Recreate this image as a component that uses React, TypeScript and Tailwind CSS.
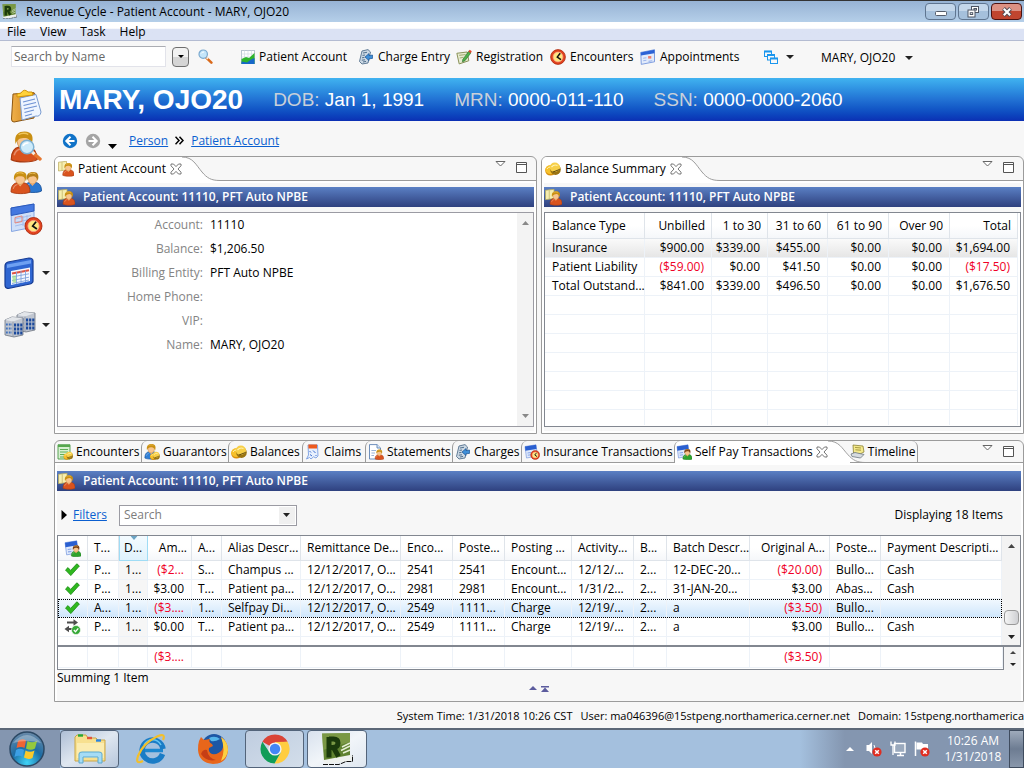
import type { ReactNode } from "react";

type IconProps = { size?: number };

function PersonShape({ x = 0, y = 0, s = 1, shirt = "#d9531e", dark = "#a93a10", hair = "#c98f12" }: { x?: number; y?: number; s?: number; shirt?: string; dark?: string; hair?: string }) {
  return (
    <g transform={`translate(${x} ${y}) scale(${s})`}>
      <path d="M0.5 19 C0.5 13 3 11 6 10.4 L12 10.4 C15.500 11 18 13 18 19 C15 21 4 21 0.5 19Z" fill={shirt} stroke={dark} strokeWidth="0.8" />
      <path d="M2.500 16 Q3.500 12.500 6.500 12" stroke="#fff" strokeWidth="1" opacity="0.350" fill="none" />
      <path d="M6 10.4 L9 14 L12 10.4Z" fill="#f3b27a" />
      <ellipse cx="9" cy="6.8" rx="4.400" ry="5.200" fill="#f8c58e" stroke="#c9853b" strokeWidth="0.5" />
      <path d="M3.4 8.500 C2.200 2 5.5 0 9.5 0 C14.500 0 16 3.4 14.2 9 C13.4 4.8 11 4 8.6 4.4 C6 4.6 4.6 5.4 3.4 8.500Z" fill={hair} />
      <path d="M5.5 2.2 C7.5 0.8 10.5 0.9 12 2" stroke="#f0c65a" strokeWidth="0.9" fill="none" />
    </g>
  );
}

function ClockShape({ cx, cy, r }: { cx: number; cy: number; r: number }) {
  return (
    <g>
      <circle cx={cx} cy={cy} r={r} fill="#e2431e" stroke="#a82408" strokeWidth={r * 0.1} />
      <circle cx={cx} cy={cy} r={r * 0.66} fill="#ffe680" stroke="#f7a78b" strokeWidth={r * 0.1} />
      <path d={`M${cx + r * 0.3} ${cy - r * 0.5} L${cx - r * 0.1} ${cy} L${cx + r * 0.4} ${cy + r * 0.35}`} stroke="#111" strokeWidth={r * 0.2} fill="none" />
    </g>
  );
}

function Coins({ x = 0, y = 0, s = 1 }: { x?: number; y?: number; s?: number }) {
  return (
    <g transform={`translate(${x} ${y}) scale(${s})`}>
      <ellipse cx="5.500" cy="8.600" rx="5.300" ry="5" fill="#d98f0c" />
      <ellipse cx="5.200" cy="7.600" rx="4.900" ry="4.400" fill="#f6c12c" />
      <ellipse cx="10.500" cy="7.500" rx="5.300" ry="5.400" fill="#9a7413" />
      <ellipse cx="9.800" cy="5.200" rx="5.200" ry="4.700" fill="#f7cf48" />
      <path d="M6.500 5 Q9 2 12.500 3.500" stroke="#fff2b0" strokeWidth="1.200" fill="none" />
      <path d="M2 7 Q3 5 5 5" stroke="#fff2b0" strokeWidth="1" fill="none" />
      <path d="M8 10 L14.500 7.500" stroke="#5d4a12" strokeWidth="1" />
    </g>
  );
}

function CalendarShape() {
  return (
    <g>
      <path d="M1 2.500 L12 0.800 L13.5 12 L2.5 14Z" fill="#dfe9fb" stroke="#7b9be0" strokeWidth="0.7" />
      <path d="M1 2.500 L12 0.800 L12.600 5 L1.4 6.800Z" fill="#2a5fd0" />
      <path d="M3.5 9 L7 8.500 M3.8 11.2 L7 10.8" stroke="#86a5e8" strokeWidth="1" />
    </g>
  );
}

function PatientIcon({ size = 16 }: IconProps) {
  return (
    <svg width={size} height={size} viewBox="0 0 16 16" className="shrink-0">
      <path d="M0.5 1.2 L8.5 0.3 L8.5 9 L0.5 10Z" fill="#f6eeb0" stroke="#b9ab5b" strokeWidth="0.7" />
      <path d="M4 1.2 L4 9.4" stroke="#b9ab5b" strokeWidth="0.6" />
      <PersonShape x={4.4} y={2} s={0.65} />
    </svg>
  );
}

function BalanceIcon() {
  return <svg width="16" height="16" viewBox="0 0 16 16" className="shrink-0"><Coins y={1} /></svg>;
}

function ChargeIcon() {
  return (
    <svg width="16" height="16" viewBox="0 0 16 16" className="shrink-0">
      <path d="M4 2 L10 0.6 L12.5 3 L10 14 L4 15 L1.5 12.5Z" fill="#cbd8e4" stroke="#54718c" strokeWidth="0.9" />
      <path d="M5 4 L9 3.3 M4.5 6.4 L7 6 M4 8.8 L6.5 8.4 M3.8 11.2 L7 10.8 M5 13 L8 12.4" stroke="#54718c" strokeWidth="1" />
      <path d="M7 8 L11 4.6 L11 6.6 L14.5 6 L14.5 9.4 L11 9.8 L11 11.6Z" fill="#3f8fd8" stroke="#1d5593" strokeWidth="0.7" />
    </svg>
  );
}

function EncounterTabIcon() {
  return (
    <svg width="16" height="16" viewBox="0 0 16 16" className="shrink-0">
      <path d="M1 0.8 H13 V15 H1Z" fill="#d8f0d2" stroke="#4a9a45" strokeWidth="0.9" />
      <path d="M1 0.8 H13 V3 H1Z" fill="#57a84f" />
      <path d="M3 5.5 H11 M3 8 H11 M3 10.5 H8 M3 13 H7" stroke="#5fae58" strokeWidth="1.1" />
      <Coins x={6.5} y={7.5} s={0.6} />
    </svg>
  );
}

function GuarantorIcon() {
  return (
    <svg width="16" height="16" viewBox="0 0 16 16" className="shrink-0">
      <PersonShape x={0.5} y={0} s={0.74} shirt="#2f7fd6" dark="#174f95" />
      <Coins x={6} y={7.5} s={0.62} />
    </svg>
  );
}

function ClaimsIcon() {
  return (
    <svg width="16" height="16" viewBox="0 0 16 16" className="shrink-0">
      <path d="M3 1 H12.5 L13 12 L11 14 L8.5 12.8 L6 15 L4.5 13.5 L1.5 15 L3.5 11Z" fill="#e8f0fd" stroke="#6b93dd" strokeWidth="0.8" />
      <path d="M3.4 0.6 H12 V4.6 H3.4Z" fill="#ee5a1e" />
      <path d="M4.5 7 L6 8.5 M8 6.5 L10.5 9 M5 10.5 L7 12 M10.5 11 L11.5 12" stroke="#3d6fd0" strokeWidth="1" />
    </svg>
  );
}

function StatementIcon() {
  return (
    <svg width="16" height="16" viewBox="0 0 16 16" className="shrink-0">
      <path d="M1.5 0.6 H9 L12.5 4 V15 H1.5Z" fill="#fff" stroke="#5f83b4" strokeWidth="0.9" />
      <path d="M9 0.6 V4 H12.5" fill="#dbe7f6" stroke="#5f83b4" strokeWidth="0.9" />
      <path d="M3.4 6.5 H8 M3.4 9 H7 M3.4 11.5 H6" stroke="#9bb4d6" />
      <PersonShape x={6.8} y={5.500} s={0.5} />
    </svg>
  );
}

function InsuranceIcon() {
  return <svg width="16" height="16" viewBox="0 0 16 16" className="shrink-0"><CalendarShape /><ClockShape cx={11.2} cy={11} r={4.5} /></svg>;
}

function SelfPayIcon({ size = 16 }: IconProps) {
  return (
    <svg width={size} height={size} viewBox="0 0 16 16" className="shrink-0">
      <CalendarShape />
      <PersonShape x={6.6} y={5} s={0.53} shirt="#2fa32c" dark="#15701a" hair="#7a3d12" />
    </svg>
  );
}

function TimelineIcon() {
  return (
    <svg width="16" height="16" viewBox="0 0 16 16" className="shrink-0">
      <path d="M3 1 L13 2 L14 8 L10 10 L3.5 9Z" fill="#f4e98c" stroke="#8a8235" strokeWidth="0.8" />
      <path d="M5 3.4 L11 4 M5.4 5.8 L11 6.2" stroke="#a79b43" />
      <path d="M1 10 L5 8.5 L14 10.5 L10.5 14 L2 12.5Z" fill="#d6dbe0" stroke="#6d7780" strokeWidth="0.8" />
    </svg>
  );
}

function ChartIcon() {
  return (
    <svg width="14" height="14" viewBox="0 0 14 14" className="shrink-0">
      <rect x="0.5" y="0.5" width="13" height="13" fill="#fff" stroke="#b9c4cf" />
      <path d="M3.5 0.5 V13 M7 0.5 V13 M10.5 0.5 V13 M0.5 4 H13 M0.5 7 H13" stroke="#d3dbe3" strokeWidth="0.7" />
      <path d="M0.5 14 V9 L5 7 L8 8 L13.5 3 V14Z" fill="#2fb52c" />
      <path d="M0.5 14 V11.5 L6 12.5 L10 9.5 L13.5 8 V14Z" fill="#1768c9" />
    </svg>
  );
}

function RegistrationIcon() {
  return (
    <svg width="16" height="16" viewBox="0 0 15 15" className="shrink-0">
      <path d="M0.8 4 L10.5 2.8 L12 11 L3 14Z" fill="#e8ecd2" stroke="#858d52" strokeWidth="0.9" />
      <path d="M3 6 L9 5.2 M3.5 8.4 L7 7.8" stroke="#a8b07a" />
      <path d="M6.4 9.8 L12 2 L14 3.6 L8.4 11 L6 12Z" fill="#4fb04a" stroke="#2a6d28" strokeWidth="0.6" />
      <path d="M11.6 2.4 L12.8 0.6 L14.8 2.2 L13.6 4Z" fill="#e2432a" />
    </svg>
  );
}

function ClockIcon() {
  return <svg width="16" height="16" viewBox="0 0 16 16" className="shrink-0"><ClockShape cx={8} cy={8} r={7.4} /></svg>;
}

function AppointmentIcon() {
  return (
    <svg width="16" height="16" viewBox="0 0 15 15" className="shrink-0">
      <path d="M0.7 3.2 L13.6 0.7 V12 L1.2 14.4Z" fill="#e2ebfb" stroke="#6c8fdb" strokeWidth="0.8" />
      <path d="M0.7 3.2 L13.6 0.7 V4 L0.9 6Z" fill="#2b62d6" />
      <path d="M3 8.6 L6 8.2 M3 11 L6 10.6 M8 11.6 L11.5 11" stroke="#9db6ec" />
      <rect x="7.6" y="6.6" width="3" height="2.4" fill="#f08070" />
    </svg>
  );
}

function WindowsIcon() {
  return (
    <svg width="14" height="14" viewBox="0 0 14 14" fill="#f7f7f7" stroke="#1a96ee" className="shrink-0">
      <rect x="0.5" y="1" width="7" height="5.5" /><path d="M0.5 1.7 H7.5" strokeWidth="1.6" />
      <rect x="3.5" y="4.5" width="7" height="5.5" /><path d="M3.5 5.2 H10.5" strokeWidth="1.6" />
      <rect x="6.5" y="8" width="7" height="5.5" /><path d="M6.5 8.7 H13.5" strokeWidth="1.6" />
    </svg>
  );
}

function SearchIcon() {
  return (
    <svg width="15" height="15" viewBox="0 0 15 15">
      <path d="M8 8.4 L13.4 13.6" stroke="#d96a1c" strokeWidth="2.6" strokeLinecap="round" />
      <path d="M8.6 8.4 L10 9.8" stroke="#f5ece2" strokeWidth="2" />
      <circle cx="5.2" cy="5.2" r="4.2" fill="#c5e6fa" stroke="#7aa9cf" strokeWidth="1.2" />
      <path d="M3 4.6 Q4 2.8 6 3" stroke="#fff" fill="none" />
    </svg>
  );
}

function CernerIcon({ size }: { size: number }) {
  return (
    <svg width={size} height={size} viewBox="0 0 32 32" className="shrink-0">
      <path d="M3 24 L29 21 L32 24 L30 28 L5 31 L1 27Z" fill="#eef1ee" />
      <path d="M2 31.500 H18 L25 28.500 L31.500 28.500 V22" stroke="#111" strokeWidth="1" fill="none" strokeDasharray="5 1" />
      <path d="M1 0.500 L29 0 L29 22 L3 27Z" fill="#5f8230" />
      <path d="M1 0.500 L29 0 L29 9 L2 17Z" fill="#8fac58" opacity="0.550" />
      <path d="M21 14 L29 10 M20 17.500 L29 13 M22 20 L29 17" stroke="#e4eed3" strokeWidth="1.400" />
      <path d="M8 4 V24.500 M8 6 H12.500 Q17 6 17 10 Q17 14.500 12 14.500 H8 M12.500 14.500 L17.500 23.500" stroke="#1b3a0c" strokeWidth="5" fill="none" />
    </svg>
  );
}

function ClipboardIcon() {
  return (
    <svg width="32" height="34" viewBox="0 0 32 34">
      <defs><linearGradient id="cb" x1="0" x2="1"><stop offset="0" stopColor="#f0b04a" /><stop offset="1" stopColor="#c97d16" /></linearGradient></defs>
      <path d="M3 5 L23 3.500 Q25 3.500 25 6 L24 29 L4 33 Q1.500 33 1.500 30Z" fill="url(#cb)" stroke="#8d5610" />
      <path d="M10 9 L26 5.500 L31 23 Q30 28 26 27 L12 31Z" fill="#eef5ff" stroke="#7a9cd0" />
      <path d="M13 13 L25 10 M13.500 16.500 L26 13.500 M14 20 L27 17 M14.500 23.500 L24 21 M15 27 L22 25" stroke="#6e92d4" strokeWidth="1.200" />
      <path d="M7 8 L7 5 L11 4 Q14 -1 18 3 L22 3 L23 6Z" fill="#ffd23b" stroke="#d2940b" />
    </svg>
  );
}

function PersonSearchIcon() {
  return (
    <svg width="32" height="32" viewBox="0 0 32 32">
      <PersonShape x={0.5} y={0.5} s={1.48} />
      <path d="M22 21 L30 28" stroke="#e6762d" strokeWidth="3.400" strokeLinecap="round" />
      <path d="M21.500 20.500 L24.500 23.200" stroke="#f4ece4" strokeWidth="3" />
      <circle cx="17" cy="16" r="6.800" fill="#cdebfb" stroke="#7fb1d2" strokeWidth="1.500" />
      <path d="M13 15 Q14.500 11.500 18.500 12" stroke="#fff" strokeWidth="1.500" fill="none" />
    </svg>
  );
}

function PeopleIcon() {
  return (
    <svg width="32" height="24" viewBox="0 0 32 24">
      <PersonShape x={13.500} y={1} s={1} shirt="#2b78d0" dark="#124a94" hair="#b57f18" />
      <PersonShape x={0.500} y={0.500} s={1.080} />
    </svg>
  );
}

function CalendarClockIcon() {
  return (
    <svg width="33" height="33" viewBox="0 0 33 33">
      <path d="M1 5 L24 1 V24 L1.500 28.500Z" fill="#cfdff8" stroke="#86a6e2" />
      <path d="M1 5 L24 1 V8 L1.200 12.500Z" fill="#4478e0" stroke="#2b59bc" />
      <path d="M5 16 L21 12.500 M5 19.500 L21 16 M5 23 L16 20.500 M13 13 V23 M17 12 V20" stroke="#a4bdec" />
      <path d="M5 14.500 L12 13 V18.500 L5 20Z" fill="none" stroke="#e8897c" />
      <ClockShape cx={23.500} cy={23} r={8.500} />
    </svg>
  );
}

function BlueCalendarIcon() {
  return (
    <svg width="31" height="32" viewBox="0 0 31 32">
      <path d="M1 9 Q1 6 4 5 L25 1 Q29 1 29 4 V24 Q29 26 26 27 L4 31.500 Q1 31 1 28Z" fill="#2f66d2" stroke="#173c94" strokeWidth="1.200" />
      <path d="M3 7.500 L27 3 V6.500 L3 11Z" fill="#6ea0f2" />
      <path d="M7 14 L26 10.500 V24 L7 28Z" fill="#f5f8ff" />
      <path d="M8 16.500 L25 13.200" stroke="#e05443" strokeWidth="2" />
      <path d="M8 20 L25 16.800 M8 23.500 L25 20.200 M8 26.500 L25 23 M12.500 15 V27 M17 14 V26 M21.500 13.500 V25" stroke="#7fa3dd" strokeWidth="0.900" />
      <path d="M8.500 18.500 H12 V25.500 H8.500Z" fill="#9fe07f" opacity="0.700" />
    </svg>
  );
}

function Building({ x, y }: { x: number; y: number }) {
  return (
    <g transform={`translate(${x} ${y})`}>
      <path d="M0 3 L7 0 L18 1 V18 L9 20 L0 18Z" fill="#c0c6d0" stroke="#6d7582" strokeWidth="0.800" />
      <path d="M0 3 L7 0 L18 1 L8 4.500Z" fill="#e3e6ea" />
      <path d="M8 4.500 V20" stroke="#8e96a3" strokeWidth="0.800" />
      <path d="M9 8 H17.500 M9 12 H17.500 M9 16 H17.500" stroke="#1c4a9c" strokeWidth="2.800" strokeDasharray="2.200 0.900" />
      <path d="M1 7.500 H7 M1 11.500 H7 M1 15.500 H7" stroke="#4373bd" strokeWidth="2.200" strokeDasharray="1.800 1" />
    </g>
  );
}

function BuildingsIcon() {
  return <svg width="33" height="28" viewBox="0 0 33 27"><Building x={13} y={0.500} /><Building x={1} y={5.500} /></svg>;
}

function Check() {
  return (
    <svg width="15" height="14" viewBox="0 0 15 14" className="mx-auto">
      <path d="M0.500 7 L3 4.600 L5.600 7.400 L11.800 0.800 L14.400 3 L5.800 12.600 Z" fill="#2fb81f" stroke="#168a12" strokeWidth="0.800" strokeLinejoin="round" />
    </svg>
  );
}

function Transfer() {
  return (
    <svg width="17" height="16" viewBox="0 0 17 16" className="mx-auto">
      <path d="M3 3.500 H10" stroke="#4e4e4e" strokeWidth="2" /><path d="M9.500 0.300 L14 3.500 L9.500 6.700Z" fill="#4e4e4e" />
      <path d="M4 10 H9" stroke="#4e4e4e" strokeWidth="2" /><path d="M5 6.800 L0.500 10 L5 13.200Z" fill="#4e4e4e" />
      <circle cx="12" cy="11" r="4.500" fill="#35a836" stroke="#fff" strokeWidth="0.600" />
      <path d="M9.800 11 L11.500 12.700 L14.300 9.400" stroke="#fff" strokeWidth="1.300" fill="none" />
    </svg>
  );
}

function Down({ w = 9, color = "#222" }: { w?: number; color?: string }) {
  return <svg width={w} height={Math.ceil(w / 2)} viewBox="0 0 10 5" preserveAspectRatio="none"><path d="M0 0 H10 L5 5Z" fill={color} /></svg>;
}

function Up({ w = 8, color = "#444" }: { w?: number; color?: string }) {
  return <svg width={w} height={Math.ceil(w / 2)} viewBox="0 0 10 5" preserveAspectRatio="none"><path d="M0 5 H10 L5 0Z" fill={color} /></svg>;
}

function CloseTab() {
  return (
    <button aria-label="Close tab" className="shrink-0">
      <svg width="12" height="12" viewBox="0 0 12 12" className="block">
        <path d="M1 1 H3.500 L6 3.600 L8.500 1 H11 V2.800 L8 6 L11 9.200 V11 H8.500 L6 8.400 L3.500 11 H1 V9.200 L4 6 L1 2.800Z" fill="#fff" stroke="#666" strokeWidth="0.900" />
      </svg>
    </button>
  );
}

function TabCurve() {
  return (
    <svg width="38" height="24" viewBox="0 0 38 24" preserveAspectRatio="none" className="block h-full shrink-0">
      <path d="M0 0 C11 0 14 8 20 15 C25 21 29 23.500 38 23.500 V24 H0Z" fill="#fff" />
      <path d="M0 0 C11 0 14 8 20 15 C25 21 29 23.500 38 23.500" fill="none" stroke="#9b9b9b" />
    </svg>
  );
}

function ViewButtons() {
  return (
    <div className="flex min-w-0 flex-1 items-start justify-end gap-2.5 border-b border-[#9b9b9b] pt-1 pr-[9px]">
      <button aria-label="View menu"><svg width="11" height="6" viewBox="0 0 11 6" className="block"><path d="M1 0.500 H10 L5.500 5Z" fill="#fff" stroke="#666" /></svg></button>
      <button aria-label="Maximize"><svg width="11" height="12" viewBox="0 0 11 12" className="block"><path d="M0.500 1.500 H10.500 V11.500 H0.500Z M0.500 3.500 H10.500" fill="#fff" stroke="#555" /></svg></button>
    </div>
  );
}

function TitleStrip() {
  return (
    <div className="flex h-5 shrink-0 items-center gap-2 bg-gradient-to-b from-[#5b80c4] to-[#2f417f] px-px">
      <PatientIcon size={17} />
      <h2 className="text-[12px] font-semibold whitespace-nowrap text-white">Patient Account: 11110, PFT Auto NPBE</h2>
    </div>
  );
}

function View({ icon, title, children }: { icon: ReactNode; title: string; children: ReactNode }) {
  return (
    <section className="flex min-w-0 flex-1 flex-col overflow-hidden rounded-t-md border border-[#9b9b9b]">
      <div className="flex h-6 shrink-0">
        <div className="flex items-center gap-1 bg-white pl-[3px]">
          {icon}
          <span className="whitespace-nowrap">{title}</span>
          <CloseTab />
        </div>
        <TabCurve />
        <ViewButtons />
      </div>
      <div className="flex flex-1 flex-col border-2 border-white pt-1">
        <TitleStrip />
        {children}
      </div>
    </section>
  );
}

const account = [
  ["Account:", "11110"],
  ["Balance:", "$1,206.50"],
  ["Billing Entity:", "PFT Auto NPBE"],
  ["Home Phone:", ""],
  ["VIP:", ""],
  ["Name:", "MARY, OJO20"],
];

const balanceHead = ["Balance Type", "Unbilled", "1 to 30", "31 to 60", "61 to 90", "Over 90", "Total"];
const balances = [
  ["Insurance", "$900.00", "$339.00", "$455.00", "$0.00", "$0.00", "$1,694.00"],
  ["Patient Liability", "($59.00)", "$0.00", "$41.50", "$0.00", "$0.00", "($17.50)"],
  ["Total Outstand...", "$841.00", "$339.00", "$496.50", "$0.00", "$0.00", "$1,676.50"],
  ...Array.from({ length: 6 }, () => ["", "", "", "", "", "", ""]),
];

const txHead = ["", "T...", "D...", "Am...", "A...", "Alias Descr...", "Remittance De...", "Enco...", "Poste...", "Posting ...", "Activity...", "B...", "Batch Descr...", "Original A...", "Poste...", "Payment Descripti..."];
const txRows = [
  ["check", "P...", "1...", "($2...", "S...", "Champus ...", "12/12/2017, O...", "2541", "2541", "Encount...", "12/12/...", "2...", "12-DEC-20...", "($20.00)", "Bullo...", "Cash"],
  ["check", "P...", "1...", "$3.00", "T...", "Patient pa...", "12/12/2017, O...", "2981", "2981", "Encount...", "1/31/2...", "2...", "31-JAN-20...", "$3.00", "Abas...", "Cash"],
  ["check", "A...", "1...", "($3....", "1...", "Selfpay Di...", "12/12/2017, O...", "2549", "1111...", "Charge", "12/19/...", "2...", "a", "($3.50)", "Bullo...", ""],
  ["transfer", "P...", "1...", "$0.00", "T...", "Patient pa...", "12/12/2017, O...", "2549", "1111...", "Charge", "12/19/...", "2...", "a", "$3.00", "Bullo...", "Cash"],
];
const sumRow = ["", "", "", "($3....", "", "", "", "", "", "", "", "", "", "($3.50)", "", ""];

const headCell = "border-r border-b border-[#dfe4ea] bg-gradient-to-b from-white from-50% to-[#f5f7fa] font-normal whitespace-nowrap";

function TxCols() {
  return (
    <colgroup>
      <col className="w-[30px]" /><col className="w-[31px]" /><col className="w-[29px]" /><col className="w-[44px]" />
      <col className="w-[30px]" /><col className="w-[79px]" /><col className="w-[100px]" /><col className="w-[52px]" />
      <col className="w-[52px]" /><col className="w-[67px]" /><col className="w-[62px]" /><col className="w-[33px]" />
      <col className="w-[83px]" /><col className="w-[80px]" /><col className="w-[51px]" /><col />
    </colgroup>
  );
}

function isAmount(i: number) {
  return i === 3 || i === 13;
}

function ToolItem({ icon, label, className }: { icon: ReactNode; label: string; className: string }) {
  return <button className={`flex items-center gap-1 whitespace-nowrap ${className}`}>{icon}{label}</button>;
}

function Tab({ icon, label, className }: { icon: ReactNode; label: string; className: string }) {
  return (
    <button className={`flex shrink-0 items-center gap-[3px] rounded-tl-md border-b border-l border-[#9b9b9b] pl-0.5 whitespace-nowrap ${className}`}>
      {icon}{label}
    </button>
  );
}

export default function App() {
  return (
    <div className="flex min-h-screen flex-col overflow-x-hidden bg-[#f7f7f7] font-['Open_Sans','Noto_Sans',sans-serif] text-[12px] leading-4 text-black">
      <header>
        <div className="flex h-[22px] items-center border-t border-[#333] bg-gradient-to-b from-[#97b3d4] to-[#b5cfe9] pl-0.5">
          <CernerIcon size={15} />
          <h1 className="ml-[9px] flex-1 whitespace-nowrap">Revenue Cycle - Patient Account - MARY, OJO20</h1>
          <div className="mr-0.5 flex gap-0.5">
            <button aria-label="Minimize" className="flex h-[17px] w-[31px] items-center justify-center rounded-sm border border-[#5f7590] bg-gradient-to-b from-[#c3d6ea] from-50% to-[#a5c0dc] to-50%">
              <svg width="12" height="6" viewBox="0 0 12 6" className="mt-1"><rect x="0.500" y="0.500" width="11" height="4" rx="1" fill="#fff" stroke="#555d6b" /></svg>
            </button>
            <button aria-label="Restore" className="flex h-[17px] w-[31px] items-center justify-center rounded-sm border border-[#5f7590] bg-gradient-to-b from-[#c3d6ea] from-50% to-[#a5c0dc] to-50%">
              <svg width="13" height="12" viewBox="0 0 13 12"><g fill="#fff" stroke="#4d5564"><rect x="4.500" y="0.500" width="7" height="6" /><rect x="7" y="2.500" width="2.500" height="1.500" /><rect x="1" y="4" width="7" height="7" /><rect x="3.200" y="6.700" width="2.500" height="1.800" /></g></svg>
            </button>
            <button aria-label="Close" className="flex h-[17px] w-[31px] items-center justify-center rounded-sm border border-[#4b1210] bg-gradient-to-b from-[#dc9183] from-50% to-[#c0452f] to-50%">
              <svg width="12" height="10" viewBox="0 0 12 10"><path d="M2.500 1.500 L9.500 8.500 M9.500 1.500 L2.500 8.500" stroke="#4d4a55" strokeWidth="4" /><path d="M2.800 1.800 L9.200 8.200 M9.200 1.800 L2.800 8.200" stroke="#fff" strokeWidth="2.200" /></svg>
            </button>
          </div>
        </div>
        <nav className="flex h-[19px] items-center gap-3.5 border-b border-[#b4bcd2] bg-gradient-to-b from-white from-35% to-[#dbe2f4] to-40% px-[7px] pt-0.5">
          <button>File</button><button>View</button><button>Task</button><button>Help</button>
        </nav>
        <div className="flex h-[37px] items-center pb-1.5 pl-[11px] whitespace-nowrap">
          <input aria-label="Search by Name" placeholder="Search by Name" className="h-[21px] w-[155px] border border-[#e2e3ea] border-t-[#abadb3] bg-white px-0.5 placeholder:text-[#666]" />
          <button aria-label="Search options" className="ml-1.5 flex h-5 w-[17px] items-center justify-center rounded-sm border border-[#6e6e6e] bg-gradient-to-b from-[#f2f2f2] from-50% to-[#d5d5d5] to-50%"><Down w={6} color="#000" /></button>
          <button aria-label="Search" className="mr-7 ml-[9px]"><SearchIcon /></button>
          <ToolItem icon={<ChartIcon />} label="Patient Account" className="w-[117px]" />
          <ToolItem icon={<ChargeIcon />} label="Charge Entry" className="w-[98px]" />
          <ToolItem icon={<RegistrationIcon />} label="Registration" className="w-[94px]" />
          <ToolItem icon={<ClockIcon />} label="Encounters" className="w-[90px]" />
          <ToolItem icon={<AppointmentIcon />} label="Appointments" className="w-[124px]" />
          <button aria-label="Windows" className="flex w-[57px] items-center gap-2"><WindowsIcon /><Down w={8} /></button>
          <button className="flex items-center gap-2.5 pt-0.5">MARY, OJO20<Down w={8} /></button>
        </div>
      </header>

      <div className="flex flex-1">
        <aside className="flex w-[54px] shrink-0 flex-col">
          <div className="flex flex-col gap-2 pt-[11px] pl-2.5">
            <button aria-label="Clipboard"><ClipboardIcon /></button>
            <button aria-label="Find person"><PersonSearchIcon /></button>
            <button aria-label="People"><PeopleIcon /></button>
            <button aria-label="Scheduling"><CalendarClockIcon /></button>
          </div>
          <div className="flex flex-col gap-[22px] pt-[21px] pl-1">
            <button aria-label="Calendar" className="flex items-center gap-[7px]"><BlueCalendarIcon /><Down w={8} /></button>
            <button aria-label="Facilities" className="flex items-center gap-[5px]"><BuildingsIcon /><Down w={8} /></button>
          </div>
        </aside>

        <main className="flex min-w-0 flex-1 flex-col">
          <div className="flex h-[43px] shrink-0 items-center gap-[30px] bg-gradient-to-b from-[#41b3f0] via-[#2272d4] to-[#0c2fb4] pl-[5px] font-['Liberation_Sans',Arial,sans-serif] text-[19px] whitespace-nowrap text-white">
            <strong className="text-[28px]">MARY, OJO20</strong>
            <span><span className="text-[#c9d0d9]">DOB:</span> Jan 1, 1991</span>
            <span><span className="text-[#c9d0d9]">MRN:</span> 0000-011-110</span>
            <span><span className="text-[#c9d0d9]">SSN:</span> 0000-0000-2060</span>
          </div>

          <nav className="flex h-[35px] shrink-0 items-center pt-1 pl-2">
            <button aria-label="Back"><svg width="16" height="16" viewBox="0 0 16 16"><circle cx="8" cy="8" r="7.200" fill="#1173c8" /><path d="M8.500 3.800 L4.300 8 L8.500 12.200 M4.500 8 H12.500" stroke="#fff" strokeWidth="2" fill="none" /></svg></button>
            <button aria-label="Forward" className="ml-[7px]"><svg width="16" height="16" viewBox="0 0 16 16"><circle cx="8" cy="8" r="7.200" fill="#a5a5a5" /><path d="M7.500 3.800 L11.700 8 L7.500 12.200 M11.500 8 H3.500" stroke="#fff" strokeWidth="2" fill="none" /></svg></button>
            <button aria-label="History" className="mr-3 ml-[7px] pt-3"><Down w={9} color="#000" /></button>
            <a href="#person" className="text-[#0b5fd0] underline">Person</a>
            <svg width="9" height="9" viewBox="0 0 9 9" className="mx-[7px]"><path d="M0.500 0.800 L4 4.500 L0.500 8.200 M4.500 0.800 L8 4.500 L4.500 8.200" stroke="#000" strokeWidth="1.500" fill="none" /></svg>
            <a href="#account" className="text-[#0b5fd0] underline">Patient Account</a>
          </nav>

          <div className="flex flex-1 gap-1">
            <View icon={<PatientIcon />} title="Patient Account">
              <div className="mt-[5px] mb-1 flex flex-1 border border-[#9b9ba3] bg-white">
                <dl className="grid flex-1 auto-rows-min grid-cols-[145px_1fr] gap-x-[7px]">
                  {account.map(([k, v]) => (
                    <div key={k} className="contents">
                      <dt className="h-6 py-1 text-right text-[#848484]">{k}</dt>
                      <dd className="h-6 py-1">{v}</dd>
                    </div>
                  ))}
                </dl>
                <div className="flex w-4 flex-col items-center justify-between bg-[#f3f3f3] py-2">
                  <Up w={7} color="#888" /><Down w={7} color="#888" />
                </div>
              </div>
            </View>

            <View icon={<BalanceIcon />} title="Balance Summary">
              <div className="mt-[5px] mb-1 flex-1 border border-[#828790] bg-white pr-0.5">
                <table className="w-full table-fixed border-separate border-spacing-0">
                  <colgroup><col className="w-[100px]" /><col className="w-[67px]" /><col className="w-[56px]" /><col className="w-[60px]" /><col className="w-[61px]" /><col className="w-[61px]" /><col /></colgroup>
                  <thead>
                    <tr className="h-[26px]">
                      {balanceHead.map((h, i) => <th key={h} className={`${headCell} ${i ? "pr-1.5 text-right" : "pl-[7px] text-left"}`}>{h}</th>)}
                    </tr>
                  </thead>
                  <tbody>
                    {balances.map((r, n) => (
                      <tr key={n} className={n === 0 ? "h-[19px] bg-gradient-to-b from-[#fafafa] to-[#e5e5e5]" : "h-[19px]"}>
                        {r.map((c, i) => (
                          <td key={i} className={`border-r border-b border-[#edf2f8] whitespace-nowrap ${i ? "pr-[7px] text-right" : "pl-[7px]"} ${c.startsWith("(") ? "text-[#f00026]" : ""}`}>{c}</td>
                        ))}
                      </tr>
                    ))}
                    <tr className="h-[15px]">
                      {balanceHead.map((h) => <td key={h} className="border-r border-[#edf2f8]" />)}
                    </tr>
                  </tbody>
                </table>
              </div>
            </View>
          </div>

          <section className="mt-1.5 flex shrink-0 flex-col overflow-hidden rounded-t-md border border-[#9b9b9b]">
            <div className="flex h-[22px]">
              <Tab icon={<EncounterTabIcon />} label="Encounters" className="w-[86px] border-l-0" />
              <Tab icon={<GuarantorIcon />} label="Guarantors" className="w-[87px]" />
              <Tab icon={<BalanceIcon />} label="Balances" className="w-[74px]" />
              <Tab icon={<ClaimsIcon />} label="Claims" className="w-[63px]" />
              <Tab icon={<StatementIcon />} label="Statements" className="w-[87px]" />
              <Tab icon={<ChargeIcon />} label="Charges" className="w-[69px]" />
              <Tab icon={<InsuranceIcon />} label="Insurance Transactions" className="w-[153px]" />
              <div className="flex shrink-0 items-center gap-[3px] rounded-tl-md border-l border-[#9b9b9b] bg-white pl-px">
                <SelfPayIcon /><span className="whitespace-nowrap">Self Pay Transactions</span><CloseTab />
              </div>
              <TabCurve />
              <button className="-ml-4 flex shrink-0 items-center gap-0.5 rounded-tr-md border-r border-b border-[#9b9b9b] pr-0.5"><TimelineIcon />Timeline</button>
              <ViewButtons />
            </div>
            <div className="border-2 border-b-0 border-white pt-1.5">
              <TitleStrip />
              <div className="flex h-11 items-center pt-1 pr-[18px] pl-1">
                <svg width="6" height="10" viewBox="0 0 6 10"><path d="M0.500 0 L6 5 L0.500 10Z" fill="#000" /></svg>
                <a href="#filters" className="mr-3 ml-1.5 text-[#0b5fd0] underline">Filters</a>
                <div className="flex h-[21px] w-[178px] items-center border border-[#9b9ba3] bg-white">
                  <input aria-label="Search" placeholder="Search" className="min-w-0 flex-1 px-1 placeholder:text-[#7c7c7c]" />
                  <button aria-label="Search list" className="mr-px flex h-[17px] w-4 items-center justify-center bg-[#f0f0f0]"><Down w={7} /></button>
                </div>
                <p className="ml-auto">Displaying 18 Items</p>
              </div>

              <div className="flex h-[112px] border border-b-2 border-[#828790] bg-white">
                <div className="min-w-0 flex-1 overflow-hidden">
                  <table className="w-full table-fixed border-separate border-spacing-0">
                    <TxCols />
                    <thead>
                      <tr className="h-[25px]">
                        {txHead.map((h, i) => (
                          <th key={i} aria-label={i === 0 ? "Status" : undefined} className={i === 2 ? "relative border border-t-0 border-[#9fdcf5] bg-gradient-to-b from-[#f4fbff] to-[#dff2fc] pl-1 text-left font-normal whitespace-nowrap" : `${headCell} ${isAmount(i) ? "pr-1 text-right" : "pl-1.5 text-left"}`}>
                            {i === 0 ? <SelfPayIcon size={17} /> : h}
                            {i === 2 && <span className="absolute top-0 left-1/2 flex -translate-x-1/2"><Down w={7} color="#6ba4c4" /></span>}
                          </th>
                        ))}
                      </tr>
                    </thead>
                    <tbody>
                      {txRows.map((r, n) => (
                        <tr key={n} className={n === 2 ? "h-[19px] bg-gradient-to-b from-[#f2f9ff] to-[#cde5fb] outline-1 -outline-offset-1 outline-black outline-dotted" : "h-[19px]"}>
                          {r.map((c, i) => (
                            <td key={i} className={`overflow-hidden border-r border-b border-[#edf2f8] whitespace-nowrap ${isAmount(i) ? "pr-[7px] text-right" : i ? "pl-1.5" : ""} ${i === 2 && n !== 2 ? "bg-[#f6f6f6]" : ""} ${c.startsWith("(") ? "text-[#f00026]" : ""}`}>
                              {c === "check" ? <Check /> : c === "transfer" ? <Transfer /> : c}
                            </td>
                          ))}
                        </tr>
                      ))}
                      <tr className="h-2">
                        {txHead.map((_, i) => <td key={i} className={`border-r border-[#edf2f8] ${i === 2 ? "bg-[#f6f6f6]" : ""}`} />)}
                      </tr>
                    </tbody>
                  </table>
                </div>
                <div className="flex w-[18px] flex-col items-center bg-[#f3f3f3] pt-2 pb-1.5">
                  <Up w={7} />
                  <div className="mt-auto mb-2.5 h-[15px] w-[15px] rounded-sm border border-[#999] bg-gradient-to-r from-[#f5f5f5] to-[#cfd0d3]" />
                  <Down w={7} />
                </div>
              </div>
              <div className="flex h-[23px]">
                <div className="min-w-0 flex-1 border border-t-0 border-[#828790] bg-white">
                  <table className="w-full table-fixed border-separate border-spacing-0">
                    <TxCols />
                    <tbody>
                      <tr className="h-[21px]">
                        {sumRow.map((c, i) => <td key={i} className={`overflow-hidden border-r border-b border-[#edf2f8] whitespace-nowrap ${isAmount(i) ? "pr-[7px] text-right" : ""} ${c ? "text-[#f00026]" : ""}`}>{c}</td>)}
                      </tr>
                    </tbody>
                  </table>
                </div>
                <div className="flex w-[17px] flex-col items-center justify-between bg-[#f3f3f3] py-1"><Up w={6} /><Down w={6} /></div>
              </div>
              <p>Summing 1 Item</p>
              <div className="flex h-[15px] items-start justify-center gap-1">
                <Up w={8} color="#5c5c9e" />
                <svg width="8" height="6" viewBox="0 0 8 6"><path d="M0 0 H8 V1.500 H0Z M0 6 L4 1.500 L8 6Z" fill="#5c5c9e" /></svg>
              </div>
            </div>
          </section>
        </main>
      </div>

      <p className="flex h-[26px] shrink-0 items-center justify-end gap-2 pt-0.5 text-[11px] whitespace-nowrap">
        <span>System Time: 1/31/2018 10:26 CST</span>
        <span>User: ma046396@15stpeng.northamerica.cerner.net</span>
        <span>Domain: 15stpeng.northamerica</span>
      </p>

      <footer className="flex h-10 shrink-0 border-t-2 border-[#5c6878] bg-[#a4c0de]">
        <div className="flex w-[60px] items-center justify-center bg-[#8496b0] pr-1.5">
          <button aria-label="Start">
            <svg width="36" height="36" viewBox="0 0 36 36" className="block">
              <defs><radialGradient id="orb" cx="0.500" cy="0.900" r="0.900"><stop offset="0" stopColor="#3fd4f7" /><stop offset="0.500" stopColor="#1c6ca4" /><stop offset="1" stopColor="#6b8aa8" /></radialGradient></defs>
              <circle cx="18" cy="18" r="17" fill="url(#orb)" stroke="#2b4864" strokeWidth="1.500" />
              <path d="M9 10 Q13 7 17 9.500 L15.500 17 Q12 15 7.500 17Z" fill="#ee6434" />
              <path d="M18.500 10 Q23 12.500 28 10 L26 17.500 Q22 20 17 17.500Z" fill="#94c83d" />
              <path d="M7 19 Q11 16.500 15 19 L13.500 26 Q10 23.500 5.500 26Z" fill="#3d9fe4" />
              <path d="M16.600 19.500 Q21 22 25.500 19.500 L23.500 27 Q19.500 29 15 26.500Z" fill="#fbc92b" />
              <path d="M4 12 Q18 -4 32 12 Q18 8 4 12Z" fill="#fff" opacity="0.300" />
            </svg>
          </button>
        </div>
        <button aria-label="File Explorer" className="flex w-[59px] items-center justify-center rounded-sm border border-[#53647a] bg-gradient-to-br from-[#aebfd6] via-[#dfe7f0] to-[#b7c7dc]">
          <svg width="32" height="32" viewBox="0 0 32 32">
            <path d="M1 4 L3 2 H12 L14 5 H22 L24 7 H31 V28 H1Z" fill="#f7e08f" stroke="#c9a544" />
            <path d="M4 2.500 H9" stroke="#27a834" strokeWidth="2.400" /><path d="M13 5 H18" stroke="#e2543b" strokeWidth="2.400" /><path d="M22 7.500 H27" stroke="#2b84df" strokeWidth="2.400" />
            <path d="M3 10 H30 V25 H3Z" fill="#fbecb0" />
            <path d="M5 30 V21 Q5 19 8 19 H25 Q28 19 28 21 V30 H24 V24 H9 V30Z" fill="#a5dcf5" stroke="#5ba9cf" />
          </svg>
        </button>
        <button aria-label="Internet Explorer" className="flex w-[63px] items-center justify-center">
          <svg width="32" height="32" viewBox="0 0 32 32">
            <path d="M8 17.500 H28" stroke="#1d87cf" strokeWidth="3.500" />
            <path d="M27.500 21 A10.500 10.500 0 1 1 28 16" fill="none" stroke="#1a7cc6" strokeWidth="5.500" />
            <path d="M9 12 A9.500 9.500 0 0 1 26 12" fill="none" stroke="#63c5f3" strokeWidth="1.500" />
            <path d="M28 7 Q31 0 23 3 Q8 10 3 23 Q0 32 8 28" fill="none" stroke="#f3bf2a" strokeWidth="2.200" />
          </svg>
        </button>
        <button aria-label="Firefox" className="flex w-[62px] items-center justify-center">
          <svg width="32" height="32" viewBox="0 0 32 32">
            <circle cx="17" cy="13" r="12" fill="#1d57a5" />
            <path d="M12 5 Q18 2 23 6 Q18 9 14 8Z" fill="#54b5ea" />
            <path d="M2 8 L4 4 L7 7 L13 6 Q11 9 15 11 L16 13 L12 15 Q11 19 15 21 Q21 22 25 17 Q28 11 24 4 Q31 9 31 17 Q30 31 16 31 Q2 30 1 17 Q1 11 2 8Z" fill="#e8661b" />
            <path d="M24 4 Q31 9 31 17 Q30 25 24 28 Q29 17 24 4Z" fill="#fbd043" />
            <path d="M4 21 Q9 29 19 27 Q11 25 10 17 Q6 16 4 21Z" fill="#c63e15" />
          </svg>
        </button>
        <button aria-label="Chrome" className="ml-px flex w-[59px] items-center justify-center rounded-sm border border-[#53647a] bg-gradient-to-br from-[#bfcde0] to-[#d3deea]">
          <svg width="30" height="30" viewBox="0 0 30 30">
            <path d="M15 15 L2.400 7.800 A14.500 14.500 0 0 1 27.600 7.800 L15 8.500Z" fill="#da4437" />
            <path d="M27.600 7.800 A14.500 14.500 0 0 1 14.500 29.500 L20.800 18.200 L15 8Z" fill="#ffcd40" />
            <path d="M2.400 7.800 A14.500 14.500 0 0 0 14.500 29.500 L20.800 18.200 L9.400 18.200Z" fill="#109d58" />
            <circle cx="15" cy="15" r="6.600" fill="#f3f3f3" /><circle cx="15" cy="15" r="5.200" fill="#4386f5" />
          </svg>
        </button>
        <button aria-label="Revenue Cycle" className="ml-[3px] flex w-[60px] items-center justify-center rounded-sm border border-[#53647a] bg-gradient-to-br from-[#d9e2ee] via-[#f1f5f9] to-[#dfe7f0]">
          <CernerIcon size={32} />
        </button>
        <div className="ml-auto flex w-[224px] items-center justify-end bg-gradient-to-r from-[#a4c0de] to-[#8496b0] to-20%">
          <button aria-label="Show hidden icons" className="mr-3"><Up w={8} color="#fff" /></button>
          <svg width="16" height="16" viewBox="0 0 16 16" className="mr-2"><path d="M0.500 4 H3 L6 1 V13 L3 10 H0.500Z" fill="#fff" /><path d="M8 4 Q10 7 8 10" stroke="#fff" fill="none" /><circle cx="11" cy="11" r="4.600" fill="#e02d20" /><path d="M9.200 9.200 L12.800 12.800 M12.800 9.200 L9.200 12.800" stroke="#fff" strokeWidth="1.500" /></svg>
          <svg width="16" height="16" viewBox="0 0 16 16" className="mr-2"><rect x="4.500" y="2.500" width="10.500" height="9" fill="#9aa9bd" stroke="#fff" strokeWidth="1.400" /><path d="M7 14.500 H14 M10.500 12 V14" stroke="#fff" strokeWidth="1.500" /><path d="M1 0.500 V4 H5 V0.500 M3 4 V14" stroke="#fff" strokeWidth="1.300" fill="none" /></svg>
          <svg width="16" height="16" viewBox="0 0 16 16" className="mr-3.5"><path d="M1.500 0.500 V15" stroke="#fff" strokeWidth="1.500" /><path d="M2.500 1.500 H8 L9 3 H14 V9.500 H8 L7 8.500 H2.500Z" fill="#fff" /><circle cx="11" cy="11" r="4.600" fill="#e02d20" /><path d="M9.200 9.200 L12.800 12.800 M12.800 9.200 L9.200 12.800" stroke="#fff" strokeWidth="1.500" /></svg>
          <div className="w-[58px] text-center whitespace-nowrap text-white">10:26 AM<br />1/31/2018</div>
          <button aria-label="Show desktop" className="ml-[7px] h-full w-[15px] border border-[#3f4c5e] bg-gradient-to-b from-[#9fabbb] via-[#6d7c92] to-[#8997ab]" />
        </div>
      </footer>
    </div>
  );
}
